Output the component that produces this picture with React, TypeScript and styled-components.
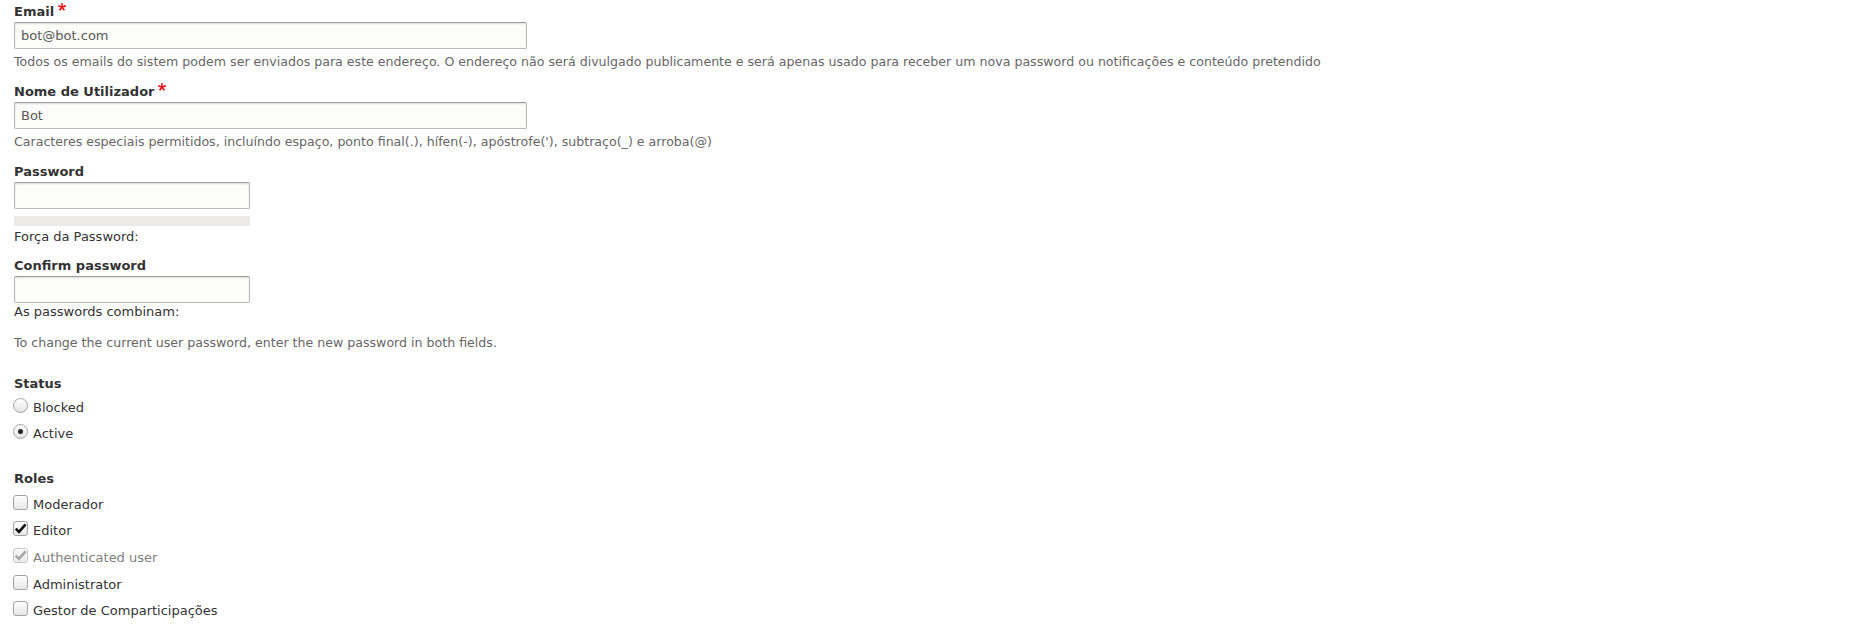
import React from 'react';
import styled, {createGlobalStyle} from 'styled-components';

const GlobalStyle = createGlobalStyle`
    html, body {
        margin: 0;
        padding: 0;
        background: #ffffff;
    }
`;

const Form = styled.form`
    padding: 2.5px 14px 0;
    font-family: "DejaVu Sans", Verdana, sans-serif;
    font-size: 13px;
    color: #333333;
`;

const FormItem = styled.div<{ $after?: number }>`
    margin-bottom: ${props => props.$after ?? 12}px;
`;

const Label = styled.label`
    display: block;
    font-weight: bold;
    line-height: 18px;
    color: #333333;
`;

const Required = styled.svg`
    display: inline-block;
    width: 8px;
    height: 8px;
    margin: 0 0 0 4px;
    vertical-align: 5px;
`;

const TextInput = styled.input<{ $width: number }>`
    display: block;
    box-sizing: border-box;
    width: ${props => props.$width}px;
    height: 27px;
    margin: 1px 0 0;
    padding: 0 6px;
    font-family: "DejaVu Sans", Verdana, sans-serif;
    font-size: 13px;
    color: #595959;
    background: #fcfcfa;
    border: 1px solid #b8b8b8;
    border-top-color: #999999;
    border-radius: 2px;
    box-shadow: inset 0 1px 2px rgba(0, 0, 0, 0.125);
    outline: none;
`;

const Description = styled.div<{ $top?: number }>`
    margin-top: ${props => props.$top ?? 4}px;
    font-size: 12.6px;
    line-height: 18px;
    color: #666666;
`;

const Message = styled.div<{ $top?: number }>`
    margin-top: ${props => props.$top ?? 0}px;
    line-height: 18px;
    color: #333333;
`;

const StrengthBar = styled.div`
    width: 236px;
    height: 10px;
    margin-top: 7px;
    background: #ebeae4;
`;

const OptionList = styled.div<{ $top: number; $gap: number }>`
    display: flex;
    flex-direction: column;
    gap: ${props => props.$gap}px;
    margin-top: ${props => props.$top}px;
`;

const Option = styled.div<{ $disabled?: boolean }>`
    display: flex;
    align-items: flex-start;
    height: 20px;
    line-height: 20px;
    margin-left: -1px;
    color: ${props => props.$disabled ? '#808080' : '#333333'};
`;

const OptionText = styled.span`
    margin-left: 5px;
`;

const RadioCircle = styled.span<{ $checked?: boolean }>`
    position: relative;
    box-sizing: border-box;
    flex: 0 0 15px;
    width: 15px;
    height: 15px;
    border: 1px solid #a3a3a3;
    border-radius: 50%;
    background: linear-gradient(#ffffff, #e4e4e4);

    &::after {
        content: '';
        display: ${props => props.$checked ? 'block' : 'none'};
        position: absolute;
        left: 4px;
        top: 4px;
        width: 5px;
        height: 5px;
        border-radius: 50%;
        background: #222222;
    }
`;

const CheckBox = styled.span<{ $disabled?: boolean }>`
    box-sizing: border-box;
    display: flex;
    align-items: center;
    justify-content: center;
    flex: 0 0 15px;
    width: 15px;
    height: 15px;
    border: 1px solid ${props => props.$disabled ? '#c8c8c8' : '#a3a3a3'};
    border-radius: 3px;
    background: ${props => props.$disabled
        ? 'linear-gradient(#f8f8f8, #ececec)'
        : 'linear-gradient(#ffffff, #e6e6e6)'};
`;

const Tick: React.FC<{ disabled?: boolean }> = ({disabled}) => (
    <svg width="13" height="13" viewBox="0 0 13 13">
        <path
            d="M1.8 6.6 L5 9.8 L11.6 2.4"
            fill="none"
            stroke={disabled ? '#a6a6a6' : '#111111'}
            strokeWidth="2.6"
            strokeLinejoin="miter"
        />
    </svg>
);

const Asterisk = () => (
    <Required viewBox="0 0 16 16">
        <path
            fill="#ee0000"
            d="M0,7.562l1.114-3.438c2.565,0.906,4.43,1.688,5.59,2.35C6.398,3.553,6.237,1.544,6.22,0.447h3.511c-0.05,1.597-0.234,3.6-0.558,6.003c1.664-0.838,3.566-1.613,5.714-2.325L16,7.562c-2.050,0.678-4.06,1.131-6.028,1.356c0.984,0.856,2.372,2.381,4.166,4.575l-2.906,2.059c-0.935-1.274-2.041-3.009-3.316-5.206c-1.194,2.275-2.244,4.013-3.147,5.206l-2.856-2.059c1.872-2.307,3.211-3.832,4.017-4.575C3.849,8.516,1.872,8.062,0,7.562"
        />
    </Required>
);

const roles = [
    {name: 'Moderador', checked: false, disabled: false},
    {name: 'Editor', checked: true, disabled: false},
    {name: 'Authenticated user', checked: true, disabled: true},
    {name: 'Administrator', checked: false, disabled: false},
    {name: 'Gestor de Comparticipações', checked: false, disabled: false},
];

const App: React.FC = () => {
    return (
        <>
            <GlobalStyle/>
            <Form onSubmit={e => e.preventDefault()}>
                <FormItem>
                    <Label>Email<Asterisk/></Label>
                    <TextInput $width={513} type="text" defaultValue="bot@bot.com"/>
                    <Description>
                        Todos os emails do sistem podem ser enviados para este endereço. O endereço não será divulgado publicamente e será apenas usado para receber um nova password ou notificações e conteúdo pretendido
                    </Description>
                </FormItem>

                <FormItem>
                    <Label>Nome de Utilizador<Asterisk/></Label>
                    <TextInput $width={513} type="text" defaultValue="Bot"/>
                    <Description>
                        Caracteres especiais permitidos, incluíndo espaço, ponto final(.), hífen(-), apóstrofe('), subtraço(_) e arroba(@)
                    </Description>
                </FormItem>

                <FormItem $after={11}>
                    <Label>Password</Label>
                    <TextInput $width={236} type="password"/>
                    <StrengthBar/>
                    <Message $top={2}>Força da Password:</Message>
                </FormItem>

                <FormItem $after={23}>
                    <Label>Confirm password</Label>
                    <TextInput $width={236} type="password"/>
                    <Message>As passwords combinam:</Message>
                    <Description $top={13}>To change the current user password, enter the new password in both fields.</Description>
                </FormItem>

                <FormItem $after={26}>
                    <Label>Status</Label>
                    <OptionList $top={5} $gap={6}>
                        <Option>
                            <RadioCircle/>
                            <OptionText>Blocked</OptionText>
                        </Option>
                        <Option>
                            <RadioCircle $checked/>
                            <OptionText>Active</OptionText>
                        </Option>
                    </OptionList>
                </FormItem>

                <FormItem>
                    <Label>Roles</Label>
                    <OptionList $top={7} $gap={6.7}>
                        {roles.map(role => (
                            <Option key={role.name} $disabled={role.disabled}>
                                <CheckBox $disabled={role.disabled}>
                                    {role.checked && <Tick disabled={role.disabled}/>}
                                </CheckBox>
                                <OptionText>{role.name}</OptionText>
                            </Option>
                        ))}
                    </OptionList>
                </FormItem>
            </Form>
        </>
    );
};

export default App;
